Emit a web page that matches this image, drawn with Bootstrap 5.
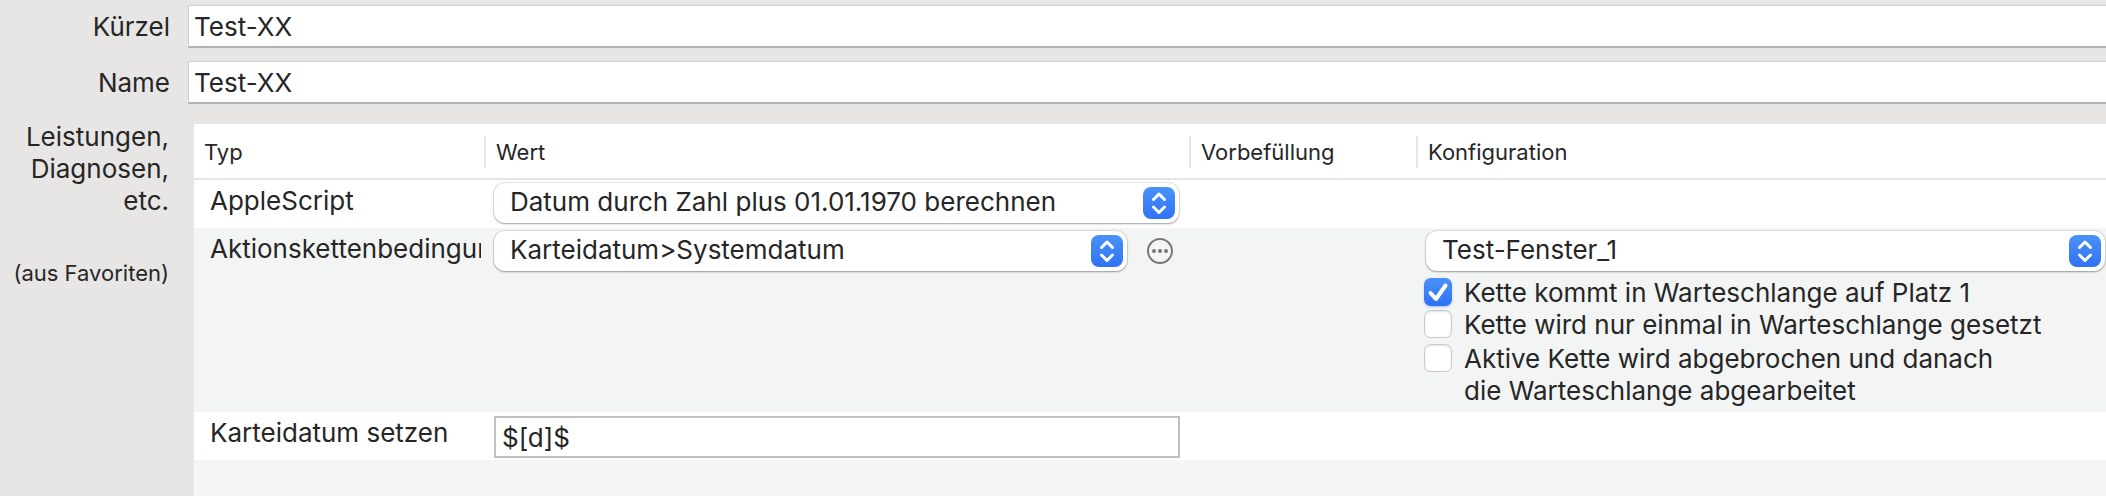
<!DOCTYPE html>
<html lang="de">
<head>
<meta charset="utf-8">
<meta name="viewport" content="width=device-width, initial-scale=1">
<title>Aktionskette bearbeiten</title>
<link rel="stylesheet" href="https://cdn.jsdelivr.net/npm/bootstrap@5.3.0/dist/css/bootstrap.min.css">
<style>
  body { background: #e8e6e5; color: #262626; font: 26px/32px Inter, "Liberation Sans", sans-serif; }
  .fields { display: grid; gap: 13px; padding-top: 5px; }
  .field-label { flex: 0 0 188px; padding-right: 18px; text-align: right; }
  .side-label { flex: 0 0 194px; padding: 17px 25px 0 0; text-align: right; }
  .small-text { font-size: 22px; }
  .text-line { height: 43px; padding: 0 5px; font-size: inherit; line-height: 32px; color: inherit; background: #fff;
    border: 1px solid #cfcdcc; border-right: 0; border-bottom: 2px solid #b3b1b0; border-radius: 0; }
  .entries { margin-top: 20px; background: #f4f5f5; }
  .entries table { table-layout: fixed; width: 100%; border-collapse: separate; border-spacing: 0; }
  .col-typ { width: 292px; }
  .col-wert { width: 705px; }
  .col-vor { width: 227px; }
  .entries th { height: 56px; padding: 2px 0 0; background: #fff; border-bottom: 2px solid #e5e5e5; font-size: 22px; font-weight: 400; }
  .entries th div { padding-left: 10px; border-right: 2px solid #e5e5e5; }
  .entries th:last-child div { border-right: 0; }
  .entries td { padding: 3px 0 0 8px; vertical-align: top; }
  .entries td:first-child { padding: 5px 5px 11px 16px; }
  .row-white { background: #fff; }
  .row-tint { background: #f3f5f5; }
  .popup { height: 40px; padding: 0 44px 2px 16px; font-size: inherit; line-height: 32px; color: inherit; border: 0; border-radius: 11px;
    background: #fff url("data:image/svg+xml,%3Csvg xmlns='http://www.w3.org/2000/svg' width='32' height='32'%3E%3Cdefs%3E%3ClinearGradient id='g' x2='0' y2='1'%3E%3Cstop stop-color='%234a92f8'/%3E%3Cstop offset='1' stop-color='%232f72f6'/%3E%3C/linearGradient%3E%3C/defs%3E%3Crect width='32' height='32' rx='8' fill='url(%23g)'/%3E%3Cpath d='M10.5 12.5L16 7L21.5 12.5M10.5 20L16 25.5L21.5 20' fill='none' stroke='%23fff' stroke-width='3' stroke-linecap='round' stroke-linejoin='round'/%3E%3C/svg%3E") no-repeat right 4px center / 32px 32px;
    box-shadow: 0 0 1px 1px rgba(0,0,0,.1), 0 1px 2px rgba(0,0,0,.3); }
  .wert-box { width: 685px; }
  .more-btn { width: 26px; height: 26px; line-height: 0; margin: 0 6px 0 20px; }
  .formula { height: 42px; margin-top: 1px; padding: 0 6px; font-size: inherit; line-height: 32px; color: inherit; border: 2px solid #c0c0c0; border-radius: 0; width: 686px; }
  .tick { flex: none; width: 28px; height: 28px; margin: 1px 12px 0 0; border: 1px solid #c8c8c8; border-radius: 7px; background-color: #fff; box-shadow: inset 0 1px 2px rgba(0,0,0,.12); }
  .tick:checked { border: 0; background: url("data:image/svg+xml,%3Csvg xmlns='http://www.w3.org/2000/svg' viewBox='0 0 28 28'%3E%3Cpath d='M6.5 15L12 21L21.5 7.5' fill='none' stroke='%23fff' stroke-width='4' stroke-linecap='round' stroke-linejoin='round'/%3E%3C/svg%3E") center / 28px, linear-gradient(#4a92f8, #2f72f6) !important; box-shadow: 0 1px 2px rgba(47,114,246,.4); }
  .ticks { margin-left: -2px; padding: 6px 0 5px; }
  .two-lines { padding-top: 2px; }
  .config-box { padding-right: 1px; }
</style>
<script src="https://cdn.jsdelivr.net/npm/bootstrap@5.3.0/dist/js/bootstrap.bundle.min.js"></script>
</head>
<body class="d-flex flex-column min-vh-100">
  <div class="fields">
    <div class="d-flex align-items-center">
      <label class="field-label" for="kuerzel">Kürzel</label>
      <input class="form-control text-line flex-fill w-auto" id="kuerzel" type="text" value="Test-XX">
    </div>
    <div class="d-flex align-items-center">
      <label class="field-label" for="name">Name</label>
      <input class="form-control text-line flex-fill w-auto" id="name" type="text" value="Test-XX">
    </div>
  </div>
  <main class="d-flex flex-grow-1">
    <div class="side-label">
      <div>Leistungen,<br>Diagnosen,<br>etc.</div>
      <div class="small-text mt-4 pt-3 text-nowrap">(aus Favoriten)</div>
    </div>
    <div class="entries flex-fill">
      <table>
        <colgroup><col class="col-typ"><col class="col-wert"><col class="col-vor"><col></colgroup>
        <thead>
          <tr><th scope="col"><div>Typ</div></th><th scope="col"><div>Wert</div></th><th scope="col"><div>Vorbefüllung</div></th><th scope="col"><div>Konfiguration</div></th></tr>
        </thead>
        <tbody>
          <tr class="row-white">
            <td><div class="overflow-hidden text-nowrap">AppleScript</div></td>
            <td><select class="form-select popup wert-box" aria-label="AppleScript"><option>Datum durch Zahl plus 01.01.1970 berechnen</option></select></td>
            <td></td><td></td>
          </tr>
          <tr class="row-tint">
            <td><div class="overflow-hidden text-nowrap">Aktionskettenbedingung</div></td>
            <td>
              <div class="d-flex align-items-center wert-box">
                <select class="form-select popup flex-fill w-auto" aria-label="Bedingung"><option>Karteidatum&gt;Systemdatum</option></select>
                <button class="btn p-0 border-0 more-btn" type="button" aria-label="Mehr">
                  <svg width="26" height="26" viewBox="0 0 26 26" fill="#777"><circle cx="13" cy="13" r="12" fill="none" stroke="#777" stroke-width="2"/><circle cx="7" cy="13" r="2"/><circle cx="13" cy="13" r="2"/><circle cx="19" cy="13" r="2"/></svg>
                </button>
              </div>
            </td>
            <td></td>
            <td>
              <div class="config-box"><select class="form-select popup" aria-label="Konfiguration"><option>Test-Fenster_1</option></select></div>
              <div class="ticks">
                <div class="d-flex"><input class="form-check-input tick" type="checkbox" id="t1" checked><label for="t1">Kette kommt in Warteschlange auf Platz 1</label></div>
                <div class="d-flex"><input class="form-check-input tick" type="checkbox" id="t2"><label for="t2">Kette wird nur einmal in Warteschlange gesetzt</label></div>
                <div class="d-flex two-lines"><input class="form-check-input tick" type="checkbox" id="t3"><label for="t3">Aktive Kette wird abgebrochen und danach<br>die Warteschlange abgearbeitet</label></div>
              </div>
            </td>
          </tr>
          <tr class="row-white">
            <td><div class="overflow-hidden text-nowrap">Karteidatum setzen</div></td>
            <td><input class="form-control formula" type="text" value="$[d]$" aria-label="Karteidatum setzen"></td>
            <td></td><td></td>
          </tr>
        </tbody>
      </table>
    </div>
  </main>
</body>
</html>
